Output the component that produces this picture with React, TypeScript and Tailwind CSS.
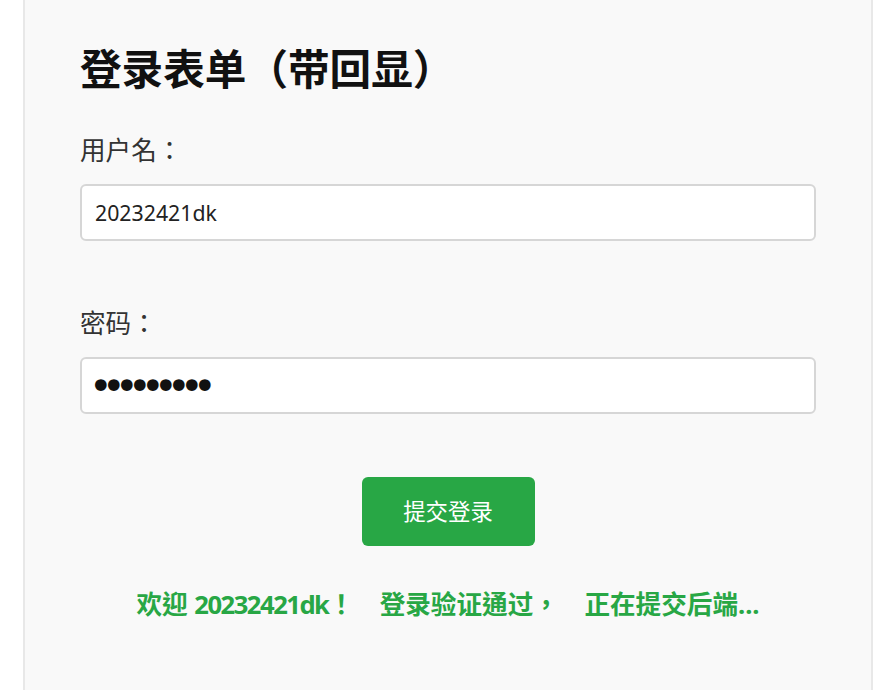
import React, { useState } from 'react';

const cjk = { fontFamily: '"Noto Sans", "Noto Sans CJK TC", sans-serif' };

const App: React.FC = () => {
  const [username, setUsername] = useState('20232421dk');
  const [password, setPassword] = useState('123456789');

  return (
    <div className="min-h-screen bg-white" style={cjk}>
      <div className="ml-[23px] min-h-[690px] w-[850px] border-x-2 border-[#e8e8e8] bg-[#f9f9f9] px-[55px] pt-[44px]">
        <h2 className="text-[41.6px] font-bold leading-[50px] text-[#111]">登录表单（带回显）</h2>

        <form onSubmit={(e) => e.preventDefault()} className="mt-[41px] flex flex-col">
          <label htmlFor="username" className="text-[25.6px] leading-[32px] text-[#333]">
            用户名：
          </label>
          <input
            id="username"
            value={username}
            onChange={(e) => setUsername(e.target.value)}
            className="mt-[17px] h-[57px] w-full rounded-[6px] border-2 border-[#d6d6d6] bg-white px-[13px] text-[21.3px] text-[#222] outline-none"
          />

          <label htmlFor="password" className="mt-[67px] text-[25.6px] leading-[32px] text-[#333]">
            密码：
          </label>
          <input
            id="password"
            type="password"
            value={password}
            onChange={(e) => setPassword(e.target.value)}
            className="mt-[17px] h-[57px] w-full rounded-[6px] border-2 border-[#d6d6d6] bg-white pl-[7px] pr-[13px] text-[40px] tracking-[-10.6px] text-[#111] outline-none"
            style={{ fontFamily: '"DejaVu Sans", sans-serif' }}
          />

          <div className="mt-[63px] flex justify-center">
            <button
              type="submit"
              className="h-[69px] w-[173px] rounded-[6px] bg-[#28a745] text-[22.4px] text-white"
            >
              提交登录
            </button>
          </div>

          <p className="mt-[43px] text-center text-[25.6px] font-bold leading-[32px] text-[#28a745]">
            欢迎 <span className="tracking-[-1.5px]">{username}</span>
            {'！\u3000登录验证通过，\u3000正在提交后端...'}
          </p>
        </form>
      </div>
    </div>
  );
};

export default App;
